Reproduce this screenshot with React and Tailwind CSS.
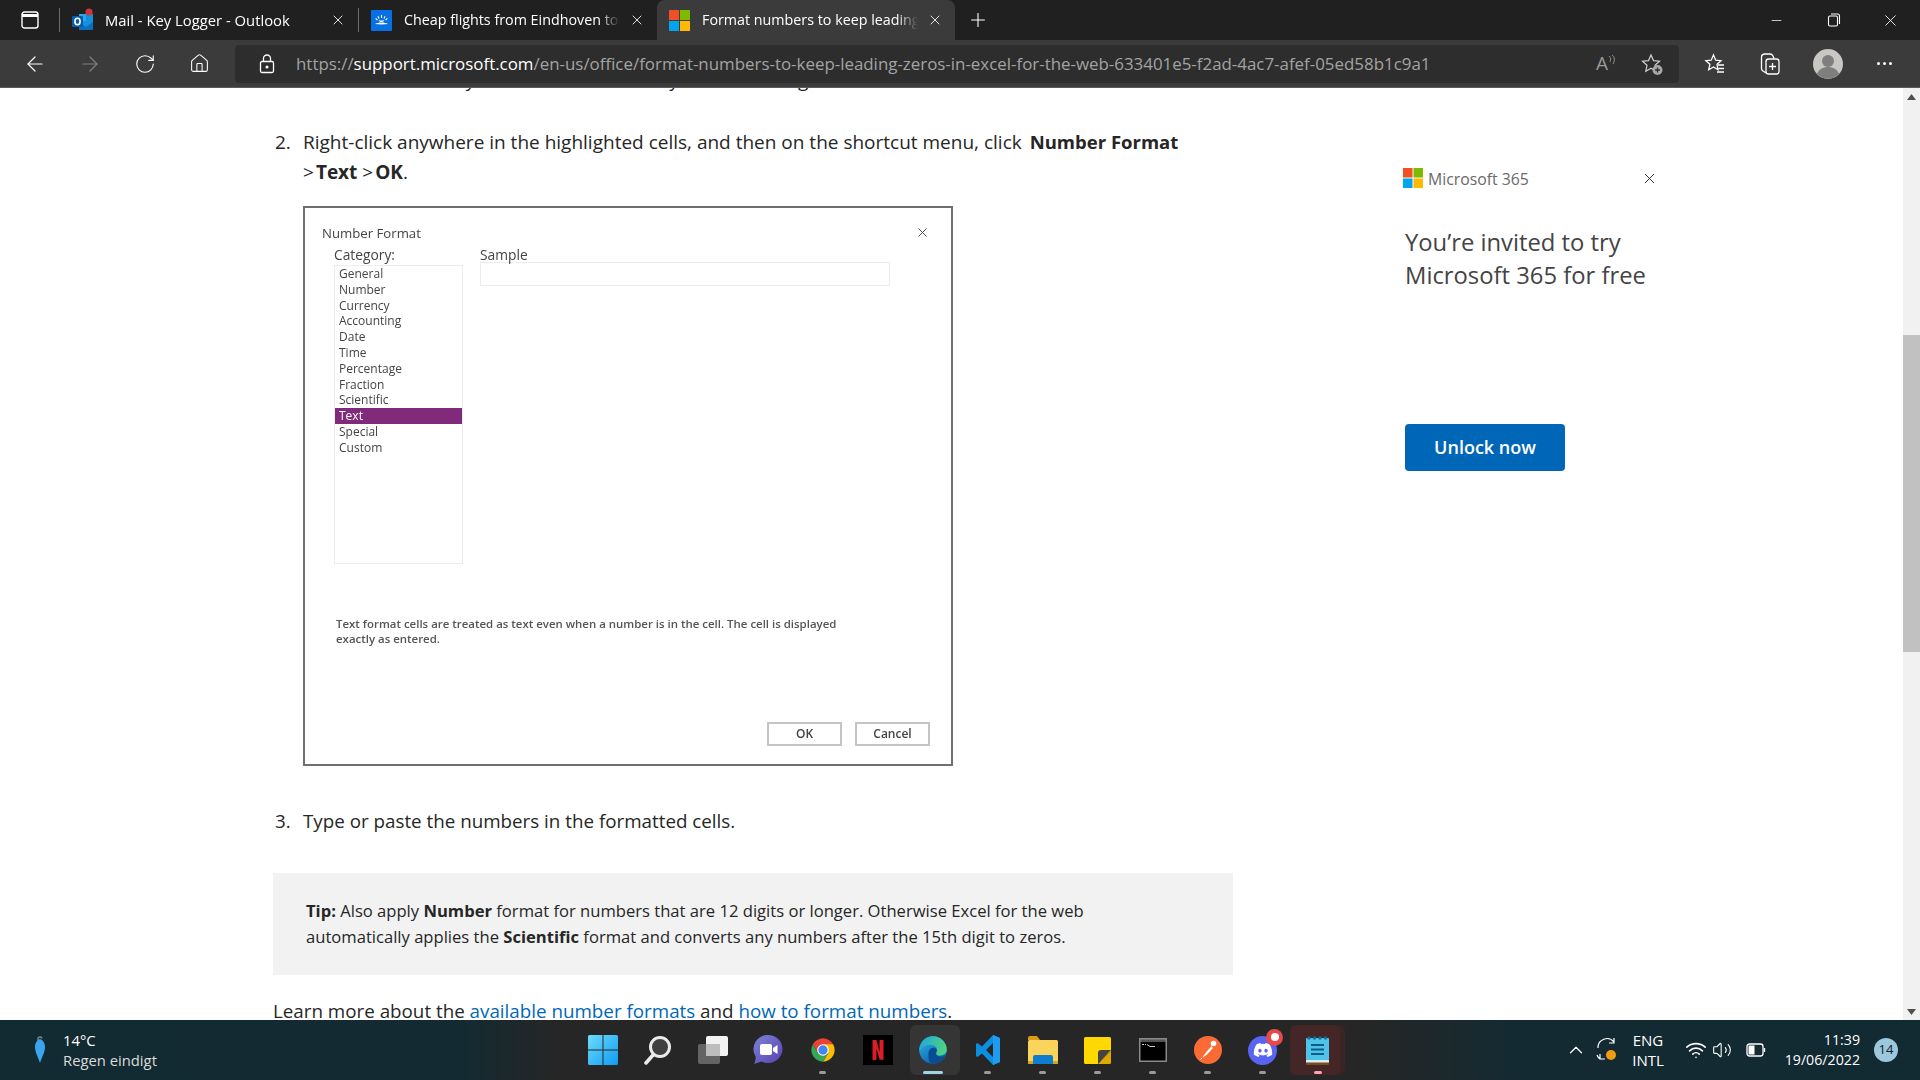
import React from 'react';
import { ArrowLeft, ArrowRight, RotateCw, Home, Plus, Minus, X, ChevronUp, Wifi, Volume2 } from 'lucide-react';
import { FaDiscord } from 'react-icons/fa';

function MsLogo({ size = 21 }) {
  return (
    <svg width={size} height={size} viewBox="0 0 21 21" className="shrink-0">
      <rect x="0" y="0" width="10" height="10" fill="#f25022" />
      <rect x="11" y="0" width="10" height="10" fill="#7fba00" />
      <rect x="0" y="11" width="10" height="10" fill="#00a4ef" />
      <rect x="11" y="11" width="10" height="10" fill="#ffb900" />
    </svg>
  );
}

function OutlookIcon() {
  return (
    <svg width="21" height="24" viewBox="0 0 21 24" className="shrink-0">
      <rect x="7" y="6" width="14" height="15" fill="#1490df" />
      <rect x="7" y="6" width="7" height="7" fill="#28a8ea" />
      <path d="M7 14l7 5 7-5v8H7z" fill="#0f6cbd" />
      <rect x="0" y="8" width="11" height="11" rx="1" fill="#0a5ca8" />
      <ellipse cx="5.5" cy="13.5" rx="2.6" ry="3.2" fill="none" stroke="#fff" strokeWidth="1.6" />
      <circle cx="17" cy="4" r="3.6" fill="#d13438" />
    </svg>
  );
}

function FlightsIcon() {
  return (
    <svg width="21" height="21" viewBox="0 0 21 21" className="shrink-0">
      <rect width="21" height="21" rx="1" fill="#0770e3" />
      <path d="M4 14c4-2 9-2 13 0-4 .6-9 .6-13 0z" fill="#fff" />
      <path d="M10.5 12c-1.6 0-2.5-.8-2.8-1.8.9.3 1.8.4 2.8.4s1.9-.1 2.8-.4c-.3 1-1.2 1.8-2.8 1.8z" fill="#fff" />
      <path d="M10.5 5v3M7 6.2l1 2.4M14 6.2l-1 2.4M4.6 8.4l1.8 1.6M16.4 8.4l-1.8 1.6" stroke="#fff" strokeWidth="1.1" />
    </svg>
  );
}

function Tab({ icon, title, active, size = 'text-[14.3px]' }) {
  return (
    <div className={`flex items-center h-10 w-[298px] pl-3 shrink-0 rounded-t-lg ${active ? 'bg-[#3b3b3b]' : ''}`}>
      {icon}
      <div className={`ml-3 w-[216px] overflow-hidden whitespace-nowrap text-white [mask-image:linear-gradient(to_right,black_90%,transparent)] ${size}`}>
        {title}
      </div>
      <X size={16} strokeWidth={1.3} className="ml-[9px] text-white shrink-0" />
    </div>
  );
}

function TabStrip() {
  return (
    <div className="flex items-center h-10 bg-[#202020] text-white">
      <div className="w-[59px] h-10 flex items-center pl-[21px] shrink-0">
        <svg width="18" height="18" viewBox="0 0 18 18" fill="none" stroke="#fff" strokeWidth="1.4">
          <rect x="1" y="1" width="16" height="16" rx="2.5" />
          <path d="M1 4.5h16" strokeWidth="3" />
        </svg>
      </div>
      <div className="w-px h-6 bg-[#6d6d6d] shrink-0" />
      <Tab icon={<OutlookIcon />} title="Mail - Key Logger - Outlook" size="text-[14.8px]" />
      <div className="w-px h-6 bg-[#6d6d6d] shrink-0" />
      <Tab icon={<FlightsIcon />} title="Cheap flights from Eindhoven to Vienna" />
      <Tab icon={<MsLogo />} title="Format numbers to keep leading zeros" active />
      <div className="w-[46px] flex justify-center shrink-0">
        <Plus size={22} strokeWidth={1.2} />
      </div>
      <div className="flex-1" />
      <div className="flex items-center pr-px">
        <div className="w-[57px] flex justify-center">
          <Minus size={15} strokeWidth={1.2} />
        </div>
        <div className="w-[57px] flex justify-center">
          <svg width="14" height="14" viewBox="0 0 14 14" fill="none" stroke="#fff" strokeWidth="1.1">
            <rect x="1.5" y="3" width="9" height="10" rx="1.5" />
            <path d="M4 1h6.5A2 2 0 0 1 12.5 3v8" />
          </svg>
        </div>
        <div className="w-[57px] flex justify-center">
          <X size={19} strokeWidth={1.1} />
        </div>
      </div>
    </div>
  );
}

function ToolbarBtn({ children, w = 'w-[55px]' }) {
  return <div className={`${w} flex justify-center items-center shrink-0`}>{children}</div>;
}

function Toolbar() {
  return (
    <div className="flex items-center h-12 bg-[#3b3b3b] border-b border-[#5a5a5a] pl-[7px]">
      <ToolbarBtn><ArrowLeft size={24} strokeWidth={1.2} className="text-white" /></ToolbarBtn>
      <ToolbarBtn><ArrowRight size={24} strokeWidth={1.2} className="text-[#808080]" /></ToolbarBtn>
      <ToolbarBtn><RotateCw size={22} strokeWidth={1.2} className="text-white" /></ToolbarBtn>
      <ToolbarBtn><Home size={21} strokeWidth={1.2} className="text-white" /></ToolbarBtn>
      <div className="ml-2 w-[1444px] h-[38px] rounded bg-[#2d2d2d] flex items-center shrink-0">
        <svg width="16" height="20" viewBox="0 0 16 20" fill="none" stroke="#fff" strokeWidth="1.3" className="ml-6 shrink-0">
          <rect x="1.5" y="7.5" width="13" height="11" rx="1.5" />
          <path d="M4.5 7.5V4.5a3.5 3.5 0 0 1 7 0v3" />
          <circle cx="8" cy="13" r="0.9" fill="#fff" />
        </svg>
        <div className="ml-[21px] flex-1 min-w-0 overflow-hidden whitespace-nowrap text-[16.9px] text-[#a3a3a3]">
          https://<span className="text-white">support.microsoft.com</span>/en-us/office/format-numbers-to-keep-leading-zeros-in-excel-for-the-web-633401e5-f2ad-4ac7-afef-05ed58b1c9a1
        </div>
        <div className="w-5 flex items-center shrink-0 text-[#9a9a9a] text-[19px] leading-none">
          A
          <svg width="8" height="12" viewBox="0 0 8 12" fill="none" stroke="#9a9a9a" strokeWidth="0.9" className="-mt-2">
            <path d="M1 2c2 1.500 2 4 1 6M4 1c3 2 3 6 1 9" />
          </svg>
        </div>
        <svg width="24" height="24" viewBox="0 0 24 24" fill="none" stroke="#cfcfcf" strokeWidth="1.2" className="ml-6 mr-[15px] shrink-0">
          <path d="M11 3l2.500 5.600 6 .6-4.500 4 1.200 6L11 16.200 5.800 19.200 7 13.200l-4.500-4 6-.6z" />
          <circle cx="17.500" cy="18" r="5" fill="#a8a8a8" stroke="none" />
          <path d="M17.500 15.500v5M15 18h5" stroke="#2d2d2d" strokeWidth="1.300" />
        </svg>
      </div>
      <div className="w-2 shrink-0" />
      <ToolbarBtn w="w-[56.5px]">
        <svg width="24" height="24" viewBox="0 0 24 24" fill="none" stroke="#fff" strokeWidth="1.3">
          <path d="M10.500 3l2.200 5.200 5.300.5-4 3.600 1 5.400-4.500-2.800-4.800 2.800 1.200-5.400-4-3.600 5.300-.5z" />
          <path d="M15 13h6M15.500 16.500h5.500M14 20h7" />
        </svg>
      </ToolbarBtn>
      <ToolbarBtn w="w-[56.5px]">
        <svg width="24" height="26" viewBox="2 0 24 26" fill="none" stroke="#fff" strokeWidth="1.3">
          <path d="M8 22l-3-2c-1-.6-1.500-1.500-1.500-2.500V6.500C3.500 4.500 5 3 7 3h5c1.500 0 2.500 1 3 2l1 2.500" />
          <rect x="8" y="8" width="13" height="15" rx="2.500" />
          <path d="M14.500 12v7M11 15.500h7" />
        </svg>
      </ToolbarBtn>
      <ToolbarBtn w="w-[56.5px]">
        <svg width="30" height="30" viewBox="0 0 30 30">
          <circle cx="15" cy="15" r="15" fill="#c9c7c3" />
          <circle cx="15" cy="12" r="6" fill="#7f7f7f" />
          <path d="M4 25c2-5 6-7 11-7s9 2 11 7a15 15 0 0 1-22 0z" fill="#7f7f7f" />
        </svg>
      </ToolbarBtn>
      <ToolbarBtn w="w-[56.5px]">
        <div className="flex gap-[3px]">
          <span className="w-[3px] h-[3px] rounded-full bg-white" />
          <span className="w-[3px] h-[3px] rounded-full bg-white" />
          <span className="w-[3px] h-[3px] rounded-full bg-white" />
        </div>
      </ToolbarBtn>
    </div>
  );
}

const categories = ['General', 'Number', 'Currency', 'Accounting', 'Date', 'Time', 'Percentage', 'Fraction', 'Scientific', 'Text', 'Special', 'Custom'];

function NumberFormatDialog() {
  return (
    <div className="w-[650px] h-[560px] ml-[30px] mt-[19px] border-2 border-[#6f6f6f] bg-white text-[#444] pt-[17px] pl-[17px] blur-[0.35px]">
      <div className="flex justify-between items-center h-4 pr-[21px] text-[13.2px] leading-4">
        <span>Number Format</span>
        <X size={15} strokeWidth={1.5} className="text-[#444] -mt-[2px]" />
      </div>
      <div className="flex ml-3 mt-[6px]">
        <div className="w-[129px]">
          <div className="text-[13.8px] leading-4">Category:</div>
          <div className="mt-[2px] h-[299px] border border-[#ececec]">
            {categories.map((c) => (
              <div
                key={c}
                className={`h-[15.8px] pl-1 text-[12px] leading-[15.8px] font-medium ${c === 'Text' ? 'bg-[#7f2a7b] text-white' : ''}`}
              >
                {c}
              </div>
            ))}
          </div>
        </div>
        <div className="ml-[17px] w-[410px]">
          <div className="text-[13.8px] leading-4">Sample</div>
          <div className="-mt-px h-6 border border-[#ececec]" />
        </div>
      </div>
      <div className="ml-[14px] mt-[52px] w-[520px] text-[11.45px] leading-[15px] font-semibold text-[#555]">
        Text format cells are treated as text even when a number is in the cell. The cell is displayed exactly as entered.
      </div>
      <div className="flex justify-end gap-[13px] pr-[21px] mt-[76px]">
        <div className="w-[75px] h-6 border-2 border-[#c4c4c4] flex items-center justify-center text-[12px] font-semibold">OK</div>
        <div className="w-[75px] h-6 border-2 border-[#c4c4c4] flex items-center justify-center text-[12px] font-semibold">Cancel</div>
      </div>
    </div>
  );
}

function Article() {
  return (
    <div className="w-[960px] ml-[273px] shrink-0 text-[#262626] text-[19px] leading-[30px]">
      <div className="-mt-[23px] pl-[30px] whitespace-nowrap">Select the cells on your worksheet where you'll be adding the data.</div>
      <div className="flex mt-8">
        <div className="w-[30px] pl-[2px] shrink-0">2.</div>
        <div className="w-[900px]">
          Right-click anywhere in the highlighted cells, and then on the shortcut menu, click <b className="font-bold ml-[3px] text-[18.5px]">Number Format</b>
          <br />
          &gt;<b className="font-bold ml-[2px]">Text</b> &gt;<b className="font-bold ml-[2px]">OK</b>.
        </div>
      </div>
      <NumberFormatDialog />
      <div className="flex mt-10 text-[18.8px]">
        <div className="w-[30px] pl-[2px] shrink-0">3.</div>
        <div>Type or paste the numbers in the formatted cells.</div>
      </div>
      <div className="mt-[37px] h-[102px] bg-[#f2f2f2] pl-[33px] pt-[25px] text-[16.6px] leading-[26px]">
        <b className="font-bold">Tip:</b> Also apply <b className="font-bold">Number</b> format for numbers that are 12 digits or longer. Otherwise Excel for the web
        <br />
        automatically applies the <b className="font-bold">Scientific</b> format and converts any numbers after the 15th digit to zeros.
      </div>
      <div className="mt-[21px] whitespace-nowrap text-[18.8px]">
        Learn more about the <span className="text-[#0067b8]">available number formats</span> and <span className="text-[#0067b8]">how to format numbers</span>.
      </div>
    </div>
  );
}

function AdPanel() {
  return (
    <div className="ml-[172px] w-[253px] pt-[80px] shrink-0">
      <div className="flex items-center h-5 -ml-[2px]">
        <MsLogo size={20} />
        <span className="ml-[5px] mt-[2px] text-[15.8px] leading-5 text-[#6a6a6a]">Microsoft 365</span>
        <div className="flex-1" />
        <X size={17} strokeWidth={1.3} className="text-[#222]" />
      </div>
      <div className="mt-[38px] text-[23.8px] leading-[33px] text-[#444] whitespace-nowrap">
        You’re invited to try
        <br />
        Microsoft 365 for free
      </div>
      <div className="mt-[132px] w-40 h-[47px] rounded-sm bg-[#0067b8] flex items-center justify-center text-white text-[18px] font-semibold">
        Unlock now
      </div>
    </div>
  );
}

function Scrollbar() {
  return (
    <div className="w-[17px] shrink-0 bg-[#f1f1f1] flex flex-col items-center">
      <div className="h-[17px] flex items-center justify-center shrink-0">
        <svg width="9" height="6" viewBox="0 0 9 6"><path d="M4.500 0L9 6H0z" fill="#505050" /></svg>
      </div>
      <div className="h-[230px] shrink-0" />
      <div className="w-full h-[317px] bg-[#c1c1c1] shrink-0" />
      <div className="flex-1" />
      <div className="h-[17px] flex items-center justify-center shrink-0">
        <svg width="9" height="6" viewBox="0 0 9 6"><path d="M4.500 6L9 0H0z" fill="#505050" /></svg>
      </div>
    </div>
  );
}

function WindowsIcon() {
  return (
    <svg width="30" height="30" viewBox="0 0 30 30">
      <defs>
        <linearGradient id="win" x1="0" y1="0" x2="1" y2="1">
          <stop offset="0" stopColor="#6fdcfb" />
          <stop offset="1" stopColor="#0f9bf2" />
        </linearGradient>
      </defs>
      <path d="M0 1.500A1.500 1.500 0 0 1 1.500 0h13v14.500H0zM15.500 0h13A1.500 1.500 0 0 1 30 1.500v13H15.500zM0 15.500h14.500V30h-13A1.500 1.500 0 0 1 0 28.500zM15.500 15.500H30v13a1.500 1.500 0 0 1-1.500 1.500h-13z" fill="url(#win)" />
    </svg>
  );
}

function SearchIcon() {
  return (
    <svg width="28" height="30" viewBox="0 0 28 30">
      <circle cx="16" cy="12" r="9.500" fill="#3f3f3f" stroke="#eaeaea" strokeWidth="3" />
      <path d="M9 20L2 28" stroke="#eaeaea" strokeWidth="3.500" strokeLinecap="round" />
    </svg>
  );
}

function TaskViewIcon() {
  return (
    <svg width="30" height="28" viewBox="0 0 30 28">
      <rect x="8" y="0" width="22" height="20" rx="2" fill="#f2f2f2" />
      <rect x="0" y="8" width="22" height="20" rx="2" fill="#6b6b6b" fillOpacity="0.9" />
      <rect x="8" y="8" width="14" height="12" fill="#bdbdbd" />
    </svg>
  );
}

function MeetIcon() {
  return (
    <svg width="30" height="30" viewBox="0 0 30 30">
      <defs>
        <linearGradient id="meet" x1="0" y1="0" x2="1" y2="1">
          <stop offset="0" stopColor="#7b83d8" />
          <stop offset="1" stopColor="#5b3fb0" />
        </linearGradient>
      </defs>
      <path d="M15.500 0a14.500 14 0 1 1-7 26.500L1 29c1.500-3 2-6 1.500-8A14.500 14 0 0 1 15.500 0z" fill="url(#meet)" />
      <rect x="7" y="9" width="12" height="11" rx="2" fill="#fff" />
      <path d="M20 13l4.500-3v9L20 16z" fill="#fff" />
    </svg>
  );
}

function ChromeIcon() {
  return (
    <svg width="28" height="28" viewBox="0 0 48 48">
      <path d="M6.700 14A20 20 0 0 1 41.300 14L33 29H15z" fill="#ea4335" />
      <path d="M33 29L24 44A20 20 0 0 0 41.300 14L24 14z" fill="#fbbc04" />
      <path d="M24 44A20 20 0 0 1 6.700 14L15 29 24 34z" fill="#34a853" />
      <path d="M15 29L24 44 33 29z" fill="#34a853" />
      <circle cx="24" cy="24" r="10" fill="#fff" />
      <circle cx="24" cy="24" r="8" fill="#4285f4" />
    </svg>
  );
}

function NetflixIcon() {
  return (
    <svg width="30" height="30" viewBox="0 0 30 30">
      <rect width="30" height="30" fill="#000" />
      <path d="M9.500 5h4l3 12V5h4v20l-4-.5-3-11v11.200l-4 .5z" fill="#d81f26" />
    </svg>
  );
}

function EdgeIcon() {
  return (
    <svg width="30" height="30" viewBox="0 0 48 48">
      <defs>
        <linearGradient id="edge1" x1="0" y1="0" x2="0.6" y2="1">
          <stop offset="0" stopColor="#2fb6e8" />
          <stop offset="1" stopColor="#0c62b0" />
        </linearGradient>
        <linearGradient id="edge2" x1="0" y1="0.3" x2="1" y2="0.5">
          <stop offset="0" stopColor="#1fa8dd" />
          <stop offset="1" stopColor="#4fd47e" />
        </linearGradient>
      </defs>
      <circle cx="24" cy="24" r="22" fill="url(#edge1)" />
      <path d="M24 2a22 22 0 0 1 22 22c0 6-6 9-12 9-4 0-7-2-5-5 3-3 2-8-3-11C17 13 7 18 2 26 2 13 11 2 24 2z" fill="url(#edge2)" />
      <path d="M17 32c-2-8 5-14 11-11 4 3 1 6 1 8 0 5 8 7 14 4-3 8-11 13-19 13-6 0-8-7-7-14z" fill="#0a4c92" />
    </svg>
  );
}

function VsCodeIcon() {
  return (
    <svg width="24" height="30" viewBox="0 0 24 30">
      <path d="M17 0l7 3v24l-7 3L6 18.500 1.500 22 0 21V9l1.500-1L6 11.500zM17 8l-7 7 7 7z" fill="#0b8fe0" fillRule="evenodd" />
      <path d="M17 0l7 3v24l-7 3z" fill="#1f9cf0" />
    </svg>
  );
}

function FolderIcon() {
  return (
    <svg width="30" height="28" viewBox="0 0 30 28">
      <path d="M0 2a2 2 0 0 1 2-2h7l3 4h-12z" fill="#d99d16" />
      <rect x="0" y="4" width="30" height="24" rx="1.500" fill="#fbd45c" />
      <path d="M0 25h30v1.500a1.500 1.500 0 0 1-1.500 1.500h-27A1.500 1.500 0 0 1 0 26.500z" fill="#dca41e" />
      <path d="M5 21a2 2 0 0 1 2-2h16a2 2 0 0 1 2 2v7H5z" fill="#0f7ccf" />
    </svg>
  );
}

function StickyIcon() {
  return (
    <svg width="27" height="27" viewBox="0 0 27 27">
      <path d="M1.500 0h24A1.500 1.500 0 0 1 27 1.500V14L14 27H1.500A1.500 1.500 0 0 1 0 25.500V1.500A1.500 1.500 0 0 1 1.500 0z" fill="#ffd800" />
      <path d="M27 14v11.500a1.500 1.500 0 0 1-1.500 1.500H14z" fill="#e2a800" />
      <path d="M27 13H17a3 3 0 0 0-3 3v11z" fill="#444" />
    </svg>
  );
}

function CmdIcon() {
  return (
    <svg width="28" height="24" viewBox="0 0 28 24">
      <rect width="28" height="24" fill="#8a8a8a" />
      <rect x="1.500" y="1.500" width="25" height="3" fill="#555" />
      <rect x="1.500" y="4" width="25" height="18.500" fill="#000" />
      <path d="M3 6.500h2M6 6.500h1M8 6.500l3 2h5" stroke="#ccc" strokeWidth="1" fill="none" />
    </svg>
  );
}

function PostmanIcon() {
  return (
    <svg width="28" height="28" viewBox="0 0 28 28">
      <circle cx="14" cy="14" r="14" fill="#f96a35" />
      <circle cx="19.500" cy="7.500" r="2.800" fill="#fff" />
      <path d="M17.500 10l-6 7-3.500 5 5-3.500 6-6.500" fill="#fff" />
      <path d="M8 22l-1.500 1.500" stroke="#fff" strokeWidth="1" />
    </svg>
  );
}

function DiscordIcon() {
  return (
    <div className="relative w-[29px] h-[29px] rounded-full bg-[#5865f2] flex items-center justify-center">
      <FaDiscord size={20} className="text-white" />
      <div className="absolute -top-[7px] -right-[6px] w-[17px] h-[17px] rounded-full bg-[#e5484d] flex items-center justify-center">
        <span className="w-[8px] h-[8px] rounded-full bg-white" />
      </div>
    </div>
  );
}

function NotepadIcon() {
  return (
    <svg width="24" height="30" viewBox="0 0 24 30">
      <rect x="0" y="3" width="23" height="27" rx="1" fill="#7c4a1e" />
      <rect x="0" y="3" width="23" height="22" rx="1" fill="#4fc3e8" />
      <rect x="0" y="25" width="23" height="2.500" fill="#d8eef5" />
      <circle cx="3" cy="3" r="1.700" fill="#0e6f99" />
      <circle cx="8.500" cy="3" r="1.700" fill="#0e6f99" />
      <circle cx="14" cy="3" r="1.700" fill="#0e6f99" />
      <circle cx="19.500" cy="3" r="1.700" fill="#0e6f99" />
      <path d="M5 10h13M5 14.500h13M5 19h13" stroke="#0e5f85" strokeWidth="2" />
    </svg>
  );
}

function TaskbarSlot({ children, mark, active, flash }) {
  return (
    <div className="relative w-[55px] h-[60px] flex items-center justify-center shrink-0">
      {active && <div className="absolute left-[5px] top-[5px] w-[50px] h-[50px] rounded-md bg-[#353535]" />}
      {flash && <div className="absolute left-0 top-[5px] w-[50px] h-[50px] rounded-md bg-[#452626] shadow-[5px_0_0_#3a2424]" />}
      <div className="relative">{children}</div>
      {mark && (
        <div className={`absolute bottom-[6px] h-[3px] rounded-full ${active ? 'w-5 bg-[#9fd3e6] left-[17.500px]' : flash ? 'w-2 bg-[#ffa3ae]' : 'w-[7px] bg-[#9a9a9a]'}`} />
      )}
    </div>
  );
}

function Taskbar() {
  return (
    <div className="flex items-center h-[60px] bg-[linear-gradient(to_right,#122a32_0%,#132a32_24%,#262626_29%,#262626_71%,#132a32_79%,#122a32_100%)] text-white">
      <div className="w-[575px] flex items-center shrink-0">
        <svg width="14" height="28" viewBox="0 0 14 28" className="ml-[33px] shrink-0">
          <path d="M5 5V2.500C5 .5 9 .5 9 2.500" fill="none" stroke="#8a8a8a" strokeWidth="1.300" />
          <path d="M7 3c3 1 5 4 5 8 0 5-3 10-5 16-2-6-5-11-5-16 0-4 2-7 5-8z" fill="#3ba4ee" />
        </svg>
        <div className="ml-4 text-[14.8px] leading-5">
          <div>14°C</div>
          <div className="text-[#dcdcdc]">Regen eindigt</div>
        </div>
      </div>
      <TaskbarSlot><WindowsIcon /></TaskbarSlot>
      <TaskbarSlot><SearchIcon /></TaskbarSlot>
      <TaskbarSlot><TaskViewIcon /></TaskbarSlot>
      <TaskbarSlot><MeetIcon /></TaskbarSlot>
      <TaskbarSlot mark><ChromeIcon /></TaskbarSlot>
      <TaskbarSlot><NetflixIcon /></TaskbarSlot>
      <TaskbarSlot mark active><EdgeIcon /></TaskbarSlot>
      <TaskbarSlot mark><VsCodeIcon /></TaskbarSlot>
      <TaskbarSlot mark><FolderIcon /></TaskbarSlot>
      <TaskbarSlot mark><StickyIcon /></TaskbarSlot>
      <TaskbarSlot mark><CmdIcon /></TaskbarSlot>
      <TaskbarSlot mark><PostmanIcon /></TaskbarSlot>
      <TaskbarSlot mark><DiscordIcon /></TaskbarSlot>
      <TaskbarSlot mark flash><NotepadIcon /></TaskbarSlot>
      <div className="flex-1 flex items-center min-w-0">
        <ChevronUp size={22} strokeWidth={1.3} className="ml-[220px] shrink-0" />
        <svg width="24" height="26" viewBox="0 0 24 26" fill="none" stroke="#fff" strokeWidth="1.200" className="ml-[8px] shrink-0">
          <path d="M3 11A9 9 0 0 1 19 5M19 1v5h-5M5 22a9 9 0 0 1-3-4M5 17v5h5" />
          <circle cx="16" cy="18" r="5" fill="#f39c12" stroke="none" />
        </svg>
        <div className="ml-[10px] w-[38px] text-[15px] leading-5 shrink-0 text-center">
          <div>ENG</div>
          <div>INTL</div>
        </div>
        <Wifi size={22} strokeWidth={1.8} className="ml-[18px] shrink-0" />
        <Volume2 size={20} strokeWidth={1.3} className="ml-[5px] shrink-0" />
        <svg width="20" height="14" viewBox="0 0 20 14" fill="none" stroke="#fff" strokeWidth="1.300" className="ml-[14px] -mr-px shrink-0">
          <rect x="1" y="1" width="16" height="12" rx="2.500" />
          <rect x="2.500" y="2.500" width="6" height="9" fill="#fff" stroke="none" />
          <path d="M18.500 5v4" />
        </svg>
        <div className="w-[95px] text-right text-[14.2px] leading-5 shrink-0">
          <div>11:39</div>
          <div>19/06/2022</div>
        </div>
        <div className="ml-[14px] w-6 h-6 rounded-full bg-[#9cc7dc] text-[#102028] text-[13px] flex items-center justify-center shrink-0">14</div>
      </div>
    </div>
  );
}

export default function App() {
  return (
    <div className="w-[1920px] h-[1080px] flex flex-col overflow-hidden bg-white font-['Open_Sans',sans-serif]">
      <TabStrip />
      <Toolbar />
      <div className="h-[932px] flex overflow-hidden">
        <Article />
        <AdPanel />
        <div className="flex-1" />
        <Scrollbar />
      </div>
      <Taskbar />
    </div>
  );
}
